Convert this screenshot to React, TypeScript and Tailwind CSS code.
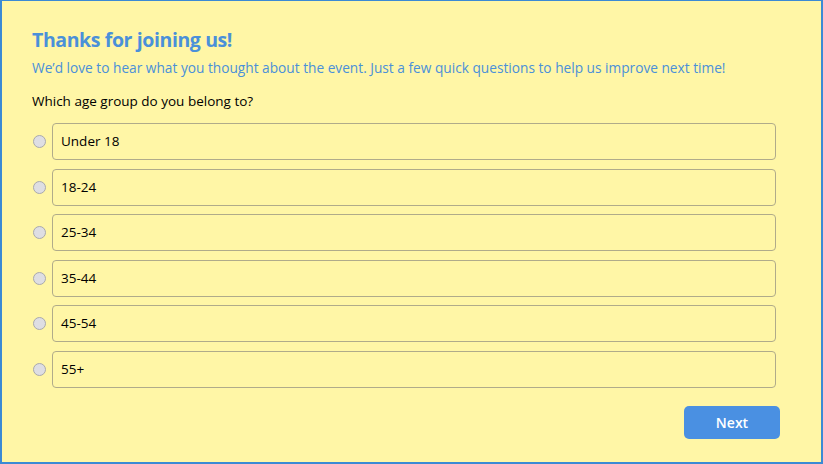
const ageGroups = ["Under 18", "18-24", "25-34", "35-44", "45-54", "55+"];

export default function App() {
  return (
    <div
      className="h-[464px] w-[823px] bg-[#fff6a6] border-2 border-t border-[#3b8ad4] px-[30px] pt-[24px]"
      style={{ fontFamily: '"Open Sans", "Noto Sans", sans-serif' }}
    >
      <h1 className="text-[19.5px] font-bold tracking-[-0.4px] text-[#4a90d9] leading-[30px]">Thanks for joining us!</h1>
      <p className="mt-[3px] text-[13.7px] text-[#4a90d9] leading-[20px]">
        We’d love to hear what you thought about the event. Just a few quick questions to help us improve next time!
      </p>
      <p className="mt-[13px] text-[13.5px] text-black leading-[20px]">Which age group do you belong to?</p>

      <div className="mt-[12px] flex flex-col gap-[8.5px] pr-[15px]">
        {ageGroups.map((group) => (
          <label key={group} className="flex items-center gap-[6px]">
            <span className="w-[13px] h-[13px] ml-[1px] rounded-full border border-[#a9a9ad] bg-[#dedee3] shrink-0" />
            <span className="flex-1 h-[37px] flex items-center px-[8px] border border-[#b0ab8a] rounded-[4px] text-[13.5px] text-black">
              {group}
            </span>
          </label>
        ))}
      </div>

      <div className="flex justify-end mt-[18px] pr-[11px]">
        <button className="w-[96px] h-[33px] rounded-[5px] bg-[#4a90e2] text-white text-[14px] font-semibold">
          Next
        </button>
      </div>
    </div>
  );
}
